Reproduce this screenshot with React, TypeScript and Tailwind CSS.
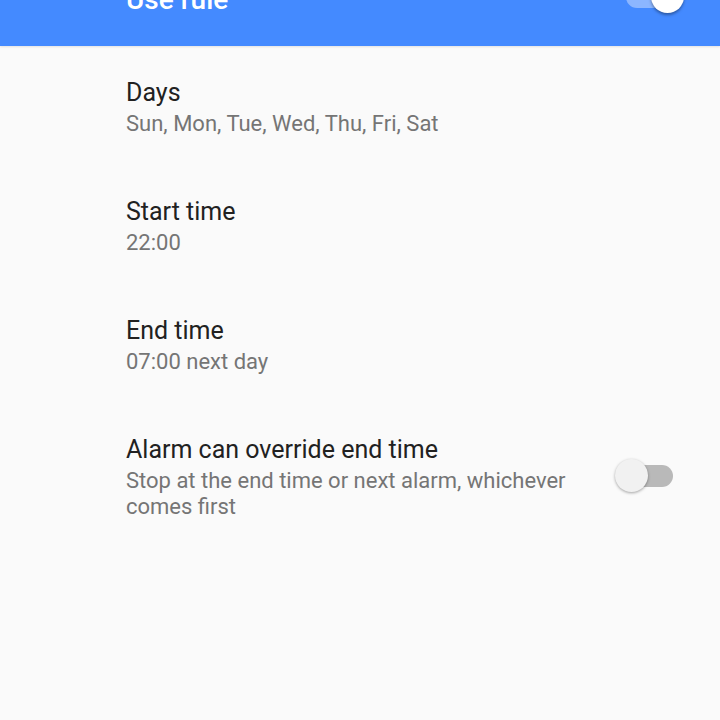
import React from "react";

function Switch({ on }: { on: boolean }) {
  return (
    <div className={`relative flex items-center w-[58px] h-[34px] shrink-0 ${on ? "justify-start" : "justify-end"}`}>
      <div className={`w-[56px] h-[22px] rounded-full ${on ? "bg-[#8cb6ff]" : "bg-[#b9b9b9]"}`} />
      <div
        className={`absolute top-0 w-[33px] h-[33px] rounded-full ${
          on ? "right-0 bg-white shadow-[0_2px_3px_rgba(0,0,0,0.35)]" : "left-0 bg-[#f1f1f1] shadow-[0_1px_3px_rgba(0,0,0,0.35)]"
        }`}
      />
    </div>
  );
}

function Row({ title, sub, toggle }: { title: string; sub: string; toggle?: boolean }) {
  return (
    <div className="flex items-center pl-[126px] pr-[47px] pt-[29px] pb-[28px]">
      <div className="flex-1 pr-[24px]">
        <div className="text-[25px] leading-[36px] text-[#212121]">{title}</div>
        <div className="text-[22px] leading-[26px] text-[#757575]">{sub}</div>
      </div>
      {toggle && <Switch on={false} />}
    </div>
  );
}

export default function App() {
  return (
    <div className="w-[720px] h-[720px] bg-[#fafafa] overflow-hidden" style={{ fontFamily: "Roboto, 'Noto Sans', sans-serif" }}>
      <div className="h-[46px] bg-[#448aff] overflow-hidden shadow-[0_1px_2px_rgba(0,0,0,0.1)]">
        <div className="flex items-center justify-between pl-[126px] pr-[36px] mt-[-20px] h-[34px]">
          <span className="text-white text-[28px] font-medium leading-[30px] mt-[6px]">Use rule</span>
          <Switch on />
        </div>
      </div>
      <Row title="Days" sub="Sun, Mon, Tue, Wed, Thu, Fri, Sat" />
      <Row title="Start time" sub="22:00" />
      <Row title="End time" sub="07:00 next day" />
      <Row title="Alarm can override end time" sub="Stop at the end time or next alarm, whichever comes first" toggle />
    </div>
  );
}
